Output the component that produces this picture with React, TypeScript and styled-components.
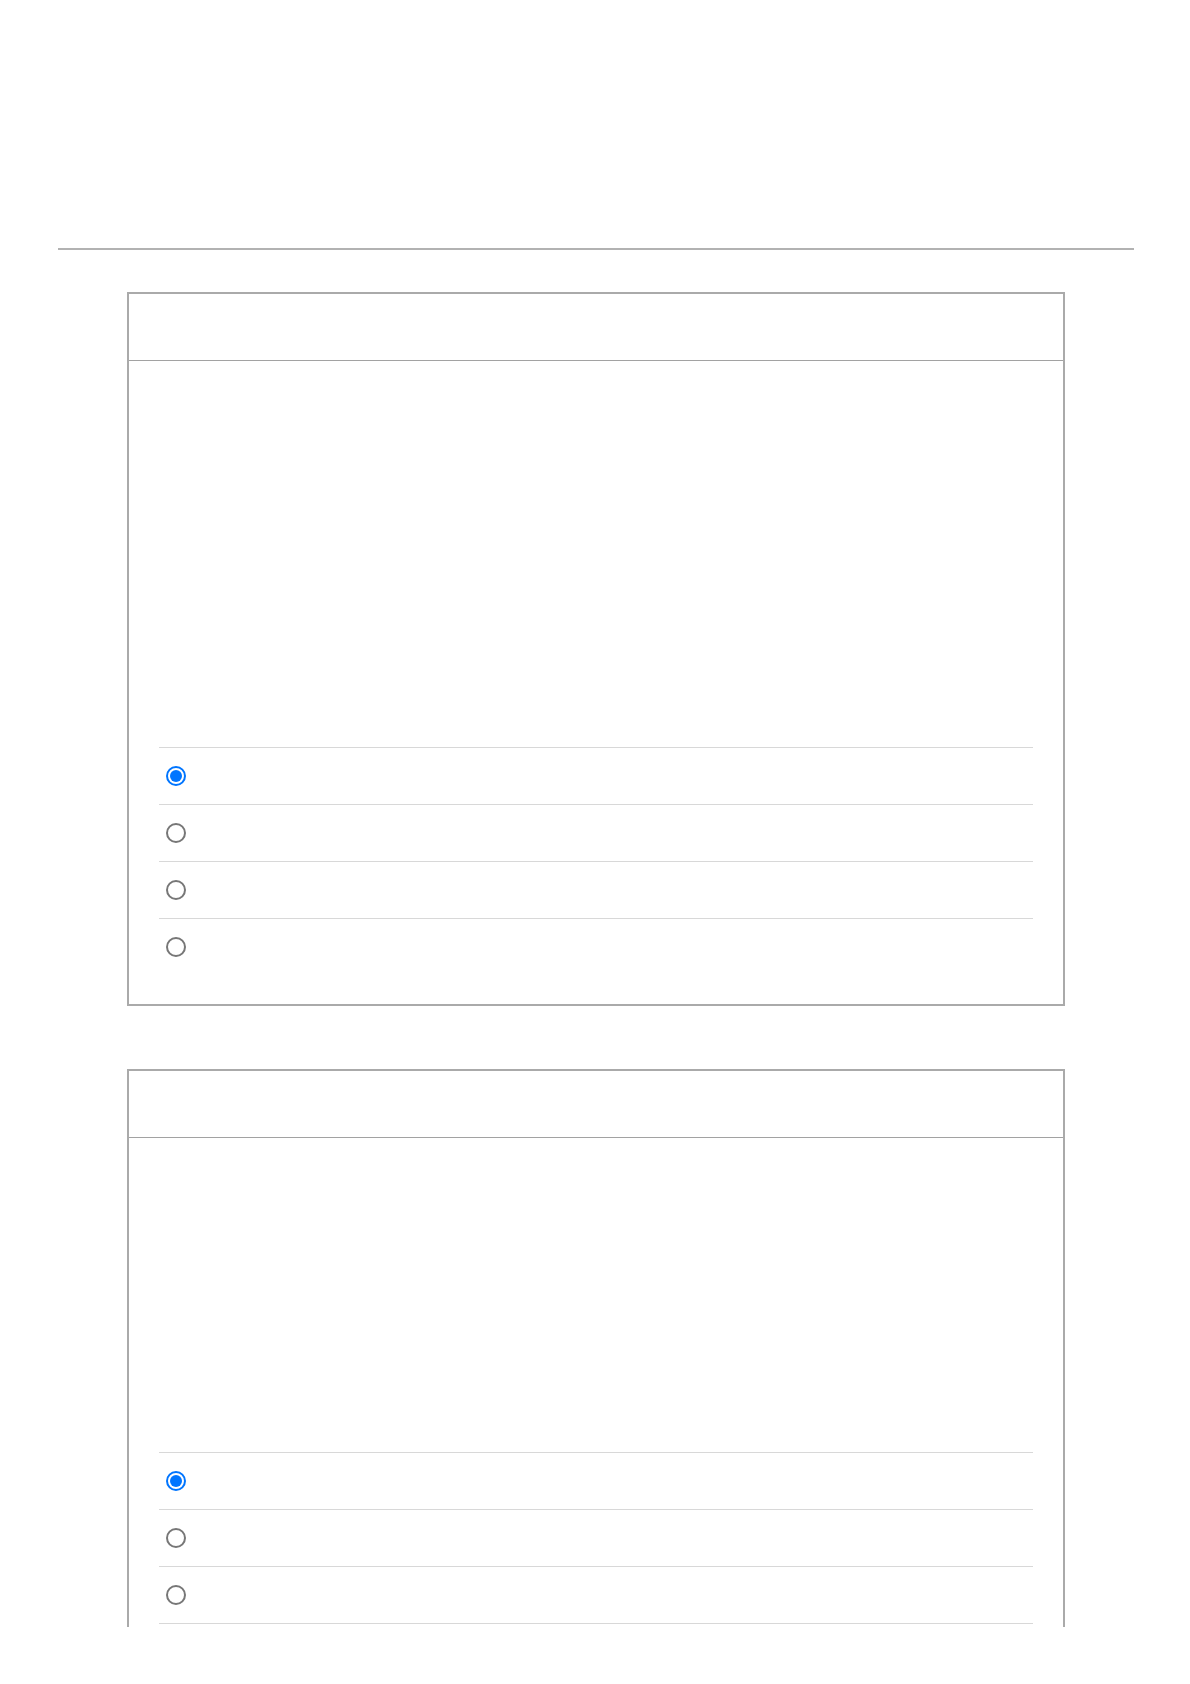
import React from 'react';
import styled, { createGlobalStyle } from 'styled-components';

const GlobalStyle = createGlobalStyle`
  body {
    margin: 0;
    background: #fff;
    font-family: "Liberation Sans", Arial, sans-serif;
    color: #222;
  }
`;

// the printed sheet stops short of the window bottom
const Sheet = styled.div`
  height: 1627px;
  overflow: hidden;
`;

const Page = styled.div`
  padding: 0 56px 0 58px;
`;

const Masthead = styled.header`
  height: 248px;
`;

const Rule = styled.hr`
  margin: 0;
  border: 0;
  border-top: 2px solid #b2b2b2;
`;

const Cards = styled.main`
  display: flex;
  flex-direction: column;
  gap: 63px;
  padding: 42px 69px 0 69px;
`;

const Card = styled.section`
  border: 2px solid #aaa;
  background: #fff;
`;

const CardHeader = styled.div`
  height: 66px;
  border-bottom: 1px solid #a2a2a2;
`;

const CardBody = styled.div<{ $lead: number }>`
  padding: ${p => p.$lead}px 30px 29px 30px;
`;

const Options = styled.ul`
  list-style: none;
  margin: 0;
  padding: 0;
`;

const Option = styled.li`
  display: flex;
  align-items: center;
  height: 56px;
  border-top: 1px solid #d8d8d8;
  padding-left: 7px;
`;

const Radio = styled.input`
  appearance: none;
  box-sizing: border-box;
  width: 20px;
  height: 20px;
  margin: 0;
  border-radius: 50%;
  border: 2px solid #777;
  background: #fff;
  position: relative;
  &:checked {
    border-color: #0075ff;
  }
  &:checked::after {
    content: '';
    position: absolute;
    left: 2px;
    top: 2px;
    width: 12px;
    height: 12px;
    border-radius: 50%;
    background: #0075ff;
  }
`;

const Label = styled.span`
  margin-left: 12px;
  font-size: 15px;
  color: transparent;
`;

type Q = { id: string; lead: number; options: number };

const questions: Q[] = [
  { id: 'q1', lead: 386, options: 4 },
  { id: 'q2', lead: 314, options: 4 },
];

const App = () => {
  return (
    <>
      <GlobalStyle />
      <Sheet>
        <Page>
          <Masthead />
          <Rule />
          <Cards>
            {questions.map(q => (
              <Card key={q.id}>
                <CardHeader />
                <CardBody $lead={q.lead}>
                  <Options>
                    {Array.from({ length: q.options }).map((_, i) => (
                      <Option key={i}>
                        <Radio type="radio" name={q.id} defaultChecked={i === 0} />
                        <Label />
                      </Option>
                    ))}
                  </Options>
                </CardBody>
              </Card>
            ))}
          </Cards>
        </Page>
      </Sheet>
    </>
  );
};

export default App;
